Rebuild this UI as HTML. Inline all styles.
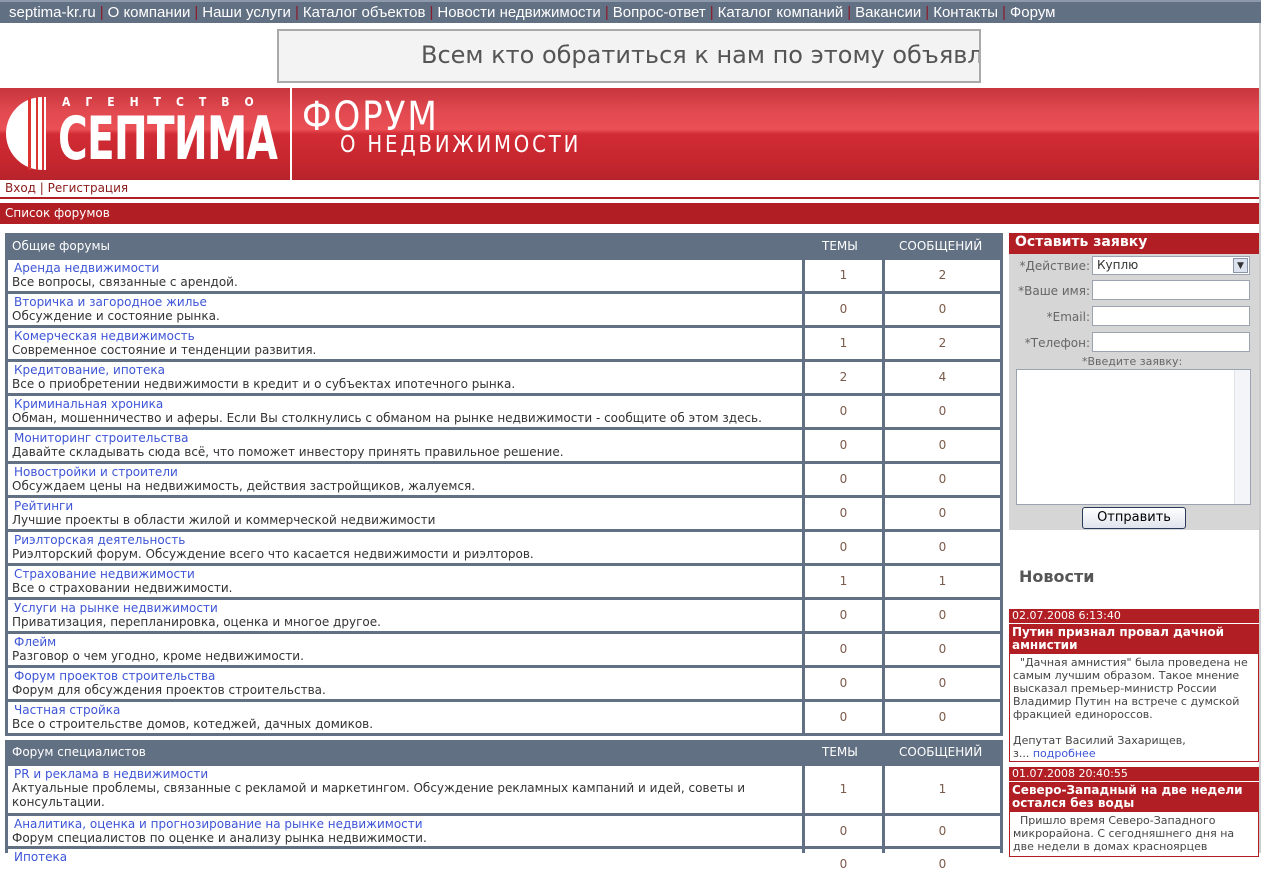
<!DOCTYPE html>
<html><head><meta charset="utf-8"><style>
*{margin:0;padding:0;box-sizing:border-box}
body{width:1261px;height:853px;overflow:hidden;background:#fff;font-family:"DejaVu Sans",Verdana,sans-serif;position:relative}
.a{position:absolute}
#nav{left:0;top:0;width:1261px;height:23px;background:#627083;border-top:2px solid #8d99ab;color:#fff;font:15px "Liberation Sans",Arial,sans-serif;padding:2px 0 0 9px;white-space:nowrap}
#nav b{color:#8b1a2a;font-weight:normal;padding:0 4px}
#ban{left:277px;top:29px;width:704px;height:54px;background:#f3f3f3;border:2px solid #aaa;font:24px "DejaVu Sans",sans-serif;color:#555;padding:10px 0 0 142px;white-space:nowrap;overflow:hidden}
#hdr{left:0;top:88px;width:1259px;height:92px;background:linear-gradient(#c7353d 0%,#e14950 25%,#ea5055 45%,#d22c35 50%,#c5262e 80%,#b8232b 100%)}
#div{left:290px;top:88px;width:2px;height:110px;background:#fff}
.lt{color:#fff;font-family:"DejaVu Sans Condensed","DejaVu Sans",sans-serif;font-weight:bold}
#login{left:5px;top:181px;font-size:12px;color:#8b1a1a}
#rl{left:0;top:197px;width:1259px;height:2px;background:#b11f24}
#list{left:0;top:203px;width:1259px;height:21px;background:#b11f24;color:#fff;font-size:12px;padding:3px 0 0 5px}
.tb{position:absolute;left:5px;width:998px;background:#627083}
.th{position:absolute;color:#fff;font-size:12px}
.c{position:absolute;background:#fff;font-size:12px;line-height:14px}
.n{left:3px;width:794px;padding:1px 0 0 4px;color:#333}
.n a{color:#3d55d6;text-decoration:none;padding-left:2px}
.t{left:800px;width:77px;text-align:center;color:#7a5a4a}
.m{left:880px;width:115px;text-align:center;color:#7a5a4a}
#rp{left:1009px;top:233px;width:250px;height:297px;background:#d6d6d6}
#rph{left:1009px;top:233px;width:250px;height:21px;background:#b11f24;color:#fff;font-weight:bold;font-size:14px;padding:1px 0 0 6px}
.lb{position:absolute;font-size:12px;color:#666;text-align:right;width:80px;left:1010px}
.in{position:absolute;left:1092px;width:158px;height:20px;background:#fff;border:1px solid #9aa4b0}
.nw{position:absolute;left:1009px;width:250px;color:#fff;background:#b11f24;font-size:11px}
.nb{position:absolute;left:1009px;width:250px;border:1px solid #b11f24;border-top:0;background:#fff;font-size:11px;color:#444;line-height:13px;padding:2px 8px 2px 3px}
</style></head><body>
<div id="nav" class="a">septima-kr.ru<b>|</b>О компании<b>|</b>Наши услуги<b>|</b>Каталог объектов<b>|</b>Новости недвижимости<b>|</b>Вопрос-ответ<b>|</b>Каталог компаний<b>|</b>Вакансии<b>|</b>Контакты<b>|</b>Форум</div>
<div class="a" style="left:1259px;top:23px;width:2px;height:830px;background:#ccc"></div>
<div id="ban" class="a">Всем кто обратиться к нам по этому объявле</div>
<div id="hdr" class="a"></div>
<div class="a" style="left:6px;top:97px;width:40px;height:73px;background:#fff;border-radius:38px 0 0 38px"></div>
<div class="a" style="left:28px;top:97px;width:3px;height:73px;background:#d33"></div>
<div class="a" style="left:36px;top:97px;width:2px;height:73px;background:#d33"></div>
<div class="a" style="left:42px;top:97px;width:2px;height:73px;background:#d33"></div>
<div class="a lt" style="left:62px;top:95px;font-size:12px;letter-spacing:15px">АГЕНТСТВО</div>
<div class="a lt" style="left:58px;top:104px;font-size:60px;line-height:70px;letter-spacing:-1px;transform:scaleX(0.75);transform-origin:left">СЕПТИМА</div>
<div class="a" style="left:302px;top:96px;color:#fff;font-size:40px;line-height:42px;letter-spacing:2px;font-family:'DejaVu Sans Condensed',sans-serif;transform:scaleX(0.95);transform-origin:left">ФОРУМ</div>
<div class="a" style="left:340px;top:132px;color:#fff;font-size:23px;letter-spacing:3px;font-family:'DejaVu Sans Condensed',sans-serif;transform:scaleX(0.95);transform-origin:left">О НЕДВИЖИМОСТИ</div>
<div id="div" class="a"></div>
<div id="login" class="a">Вход | Регистрация</div>
<div id="rl" class="a"></div>
<div id="list" class="a">Список форумов</div>

<div class="tb" style="top:233px;height:503px"></div>
<div class="th" style="left:12px;top:239px">Общие форумы</div>
<div class="th" style="left:822px;top:239px">ТЕМЫ</div>
<div class="th" style="left:899px;top:239px">СООБЩЕНИЙ</div>

<div class="tb" style="top:740px;height:113px"></div>
<div class="th" style="left:12px;top:745px">Форум специалистов</div>
<div class="th" style="left:822px;top:745px">ТЕМЫ</div>
<div class="th" style="left:899px;top:745px">СООБЩЕНИЙ</div>

<div id="rows"></div>
<script>
var r=[["Аренда недвижимости","Все вопросы, связанные с арендой.",1,2],["Вторичка и загородное жилье","Обсуждение и состояние рынка.",0,0],["Комерческая недвижимость","Современное состояние и тенденции развития.",1,2],["Кредитование, ипотека","Все о приобретении недвижимости в кредит и о субъектах ипотечного рынка.",2,4],["Криминальная хроника","Обман, мошенничество и аферы. Если Вы столкнулись с обманом на рынке недвижимости - сообщите об этом здесь.",0,0],["Мониторинг строительства","Давайте складывать сюда всё, что поможет инвестору принять правильное решение.",0,0],["Новостройки и строители","Обсуждаем цены на недвижимость, действия застройщиков, жалуемся.",0,0],["Рейтинги","Лучшие проекты в области жилой и коммерческой недвижимости",0,0],["Риэлторская деятельность","Риэлторский форум. Обсуждение всего что касается недвижимости и риэлторов.",0,0],["Страхование недвижимости","Все о страховании недвижимости.",1,1],["Услуги на рынке недвижимости","Приватизация, перепланировка, оценка и многое другое.",0,0],["Флейм","Разговор о чем угодно, кроме недвижимости.",0,0],["Форум проектов строительства","Форум для обсуждения проектов строительства.",0,0],["Частная стройка","Все о строительстве домов, котеджей, дачных домиков.",0,0]];
var h="";
function row(top,ht,x){h+='<div class="c n" style="top:'+top+'px;height:'+ht+'px;left:8px"><a>'+x[0]+'</a><br>'+x[1]+'</div>'+
'<div class="c t" style="top:'+top+'px;height:'+ht+'px;left:805px;line-height:'+ht+'px">'+x[2]+'</div>'+
'<div class="c m" style="top:'+top+'px;height:'+ht+'px;left:885px;line-height:'+ht+'px">'+x[3]+'</div>';}
for(var i=0;i<r.length;i++)row(260+34*i,31,r[i]);
row(766,47,["PR и реклама в недвижимости","Актуальные проблемы, связанные с рекламой и маркетингом. Обсуждение рекламных кампаний и идей, советы и<br>консультации.",1,1]);
row(816,30,["Аналитика, оценка и прогнозирование на рынке недвижимости","Форум специалистов по оценке и анализу рынка недвижимости.",0,0]);
row(849,30,["Ипотека","",0,0]);
document.getElementById("rows").innerHTML=h;
</script>

<div id="rp" class="a"></div>
<div id="rph" class="a">Оставить заявку</div>
<div class="lb" style="top:259px">*Действие:</div>
<div class="in" style="top:256px;height:19px;font-size:12px;color:#333;padding:1px 4px">Куплю<span style="position:absolute;right:1px;top:1px;width:15px;height:15px;background:#dde3ee;border:1px solid #8a96a8;font-size:9px;text-align:center;line-height:14px">▼</span></div>
<div class="lb" style="top:284px">*Ваше имя:</div><div class="in" style="top:280px"></div>
<div class="lb" style="top:310px">*Email:</div><div class="in" style="top:306px"></div>
<div class="lb" style="top:336px">*Телефон:</div><div class="in" style="top:332px"></div>
<div class="a" style="left:1082px;top:355px;font-size:11px;color:#666">*Введите заявку:</div>
<div class="a" style="left:1016px;top:369px;width:235px;height:136px;background:#fff;border:1px solid #9aa4b0"><div style="position:absolute;right:0;top:0;width:16px;height:134px;background:#f3f5f8;border-left:1px solid #e0e4ea"></div></div>
<div class="a" style="left:1082px;top:507px;width:104px;height:22px;border:1px solid #2a3a5a;border-radius:3px;background:linear-gradient(#fff,#dfe3ec);font-size:13px;text-align:center;line-height:20px;color:#000">Отправить</div>

<div class="a" style="left:1019px;top:567px;font-size:16px;font-weight:bold;color:#555">Новости</div>
<div class="nw" style="top:609px;height:14px;padding:0 3px">02.07.2008 6:13:40</div>
<div class="nw" style="top:624px;height:30px;font-weight:bold;font-size:12px;line-height:13px;padding:2px 3px">Путин признал провал дачной амнистии</div>
<div class="nb" style="top:654px;height:108px">&nbsp; "Дачная амнистия" была проведена не самым лучшим образом. Такое мнение высказал премьер-министр России Владимир Путин на встрече с думской фракцией единороссов.<br><br>Депутат Василий Захарищев,<br>з... <span style="color:#3d55d6">подробнее</span></div>
<div class="nw" style="top:767px;height:14px;padding:0 3px">01.07.2008 20:40:55</div>
<div class="nw" style="top:782px;height:30px;font-weight:bold;font-size:12px;line-height:13px;padding:2px 3px">Северо-Западный на две недели остался без воды</div>
<div class="nb" style="top:812px;height:45px">&nbsp; Пришло время Северо-Западного микрорайона. С сегодняшнего дня на две недели в домах красноярцев</div>
</body></html>
